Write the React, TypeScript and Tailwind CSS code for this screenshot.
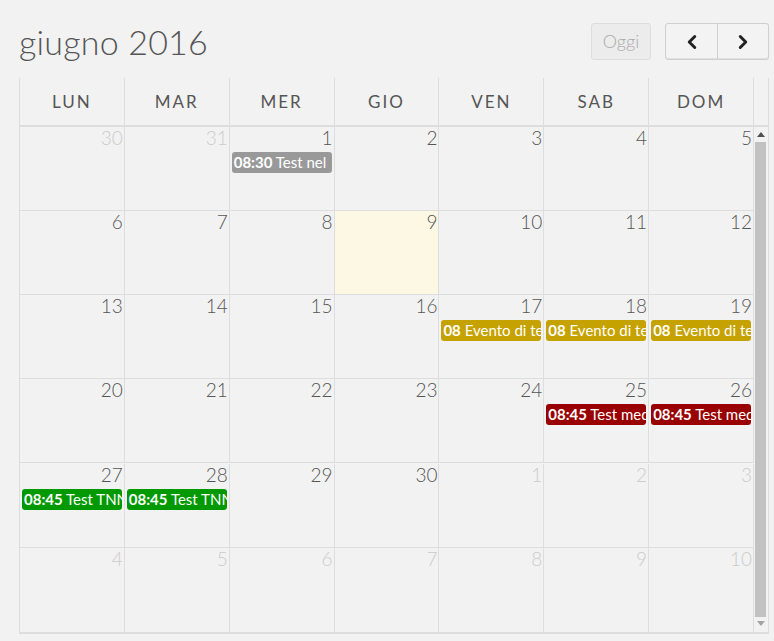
import React from "react";
import { ChevronLeft, ChevronRight } from "lucide-react";

type Ev = { time: string; title: string; color: string };
type Day = { n: number; other?: boolean; today?: boolean; ev?: Ev };

const gold = "bg-[#c6a200]";
const red = "bg-[#990000]";
const green = "bg-[#009900]";
const gray = "bg-[#999999]";

const weeks: Day[][] = [
  [
    { n: 30, other: true },
    { n: 31, other: true },
    { n: 1, ev: { time: "08:30", title: "Test nel", color: gray } },
    { n: 2 },
    { n: 3 },
    { n: 4 },
    { n: 5 },
  ],
  [{ n: 6 }, { n: 7 }, { n: 8 }, { n: 9, today: true }, { n: 10 }, { n: 11 }, { n: 12 }],
  [
    { n: 13 },
    { n: 14 },
    { n: 15 },
    { n: 16 },
    { n: 17, ev: { time: "08", title: "Evento di test", color: gold } },
    { n: 18, ev: { time: "08", title: "Evento di test", color: gold } },
    { n: 19, ev: { time: "08", title: "Evento di test", color: gold } },
  ],
  [
    { n: 20 },
    { n: 21 },
    { n: 22 },
    { n: 23 },
    { n: 24 },
    { n: 25, ev: { time: "08:45", title: "Test medico", color: red } },
    { n: 26, ev: { time: "08:45", title: "Test medico", color: red } },
  ],
  [
    { n: 27, ev: { time: "08:45", title: "Test TNN", color: green } },
    { n: 28, ev: { time: "08:45", title: "Test TNN", color: green } },
    { n: 29 },
    { n: 30 },
    { n: 1, other: true },
    { n: 2, other: true },
    { n: 3, other: true },
  ],
  [
    { n: 4, other: true },
    { n: 5, other: true },
    { n: 6, other: true },
    { n: 7, other: true },
    { n: 8, other: true },
    { n: 9, other: true },
    { n: 10, other: true },
  ],
];

const heads = ["LUN", "MAR", "MER", "GIO", "VEN", "SAB", "DOM"];

export default function App() {
  return (
    <div
      className="w-[774px] h-[641px] bg-[#f2f2f2] overflow-hidden text-[#555555]"
      style={{ fontFamily: "Lato, 'Open Sans', sans-serif" }}
    >
      <div className="flex items-start justify-between pl-[19px] pr-[5px] pt-[23px] h-[78px]">
        <h2 className="text-[34px] font-light leading-[38px] tracking-[0.2px] text-[#555555]">giugno 2016</h2>
        <div className="flex items-center">
          <button className="h-[37px] w-[60px] rounded-[3px] border border-[#dddddd] bg-[#ececec] text-[#aaaaaa] text-[18px] font-light">
            Oggi
          </button>
          <div className="flex ml-[14px]">
            <button className="h-[37px] w-[53px] rounded-l-[3px] border border-[#cfcfcf] bg-[#f3f3f3] flex items-center justify-center shadow-[inset_0_-1px_0_rgba(0,0,0,0.08)]">
              <ChevronLeft size={22} strokeWidth={3.2} color="#222" />
            </button>
            <button className="h-[37px] w-[51px] rounded-r-[3px] border border-l-0 border-[#cfcfcf] bg-[#f3f3f3] flex items-center justify-center shadow-[inset_0_-1px_0_rgba(0,0,0,0.08)]">
              <ChevronRight size={22} strokeWidth={3.2} color="#222" />
            </button>
          </div>
        </div>
      </div>

      <div className="ml-[19px] w-[750px] border-l border-[#dddddd]">
        {/* header */}
        <div className="flex h-[49px] border-b-2 border-[#dddddd]">
          <div className="w-[734px] grid grid-cols-7">
            {heads.map((h) => (
              <div
                key={h}
                className="border-r border-[#dddddd] flex items-center justify-center text-[17px] tracking-[2px] text-[#555555]"
              >
                {h}
              </div>
            ))}
          </div>
          <div className="w-[15px] border-r border-[#dddddd]" />
        </div>

        {/* body */}
        <div className="flex h-[507px] border-b-2 border-[#dddddd]">
          <div className="w-[734px] grid grid-cols-7 grid-rows-6">
            {weeks.flat().map((d, i) => (
              <div
                key={i}
                className={`border-r border-b border-[#dddddd] h-[84px] flex flex-col overflow-hidden ${
                  d.today ? "bg-[#fdf8e3]" : ""
                } ${i >= 35 ? "border-b-0" : ""}`}
              >
                <div
                  className={`text-right pr-[1px] text-[19px] font-light leading-[22px] ${
                    d.other ? "text-[#cccccc]" : "text-[#555555]"
                  }`}
                >
                  {d.n}
                </div>
                {d.ev && (
                  <div
                    className={`${d.ev.color} mx-[2px] mt-[3px] h-[21px] rounded-[3px] text-white text-[15px] leading-[21px] px-[2px] whitespace-nowrap overflow-hidden`}
                  >
                    <span className="font-bold">{d.ev.time}</span> {d.ev.title}
                  </div>
                )}
              </div>
            ))}
          </div>
          <div className="w-[15px] border-r border-[#dddddd] flex flex-col items-center pt-[3px] pb-[2px]">
            <div className="w-0 h-0 border-l-[4px] border-r-[4px] border-b-[5px] border-l-transparent border-r-transparent border-b-[#505050] mt-[2px]" />
            <div className="w-[11px] flex-1 bg-[#c1c1c1] mt-[5px] mb-[4px] mr-[2px]" />
            <div className="w-0 h-0 border-l-[4px] border-r-[4px] border-t-[5px] border-l-transparent border-r-transparent border-t-[#a3a3a3] mb-[4px]" />
          </div>
        </div>
      </div>
    </div>
  );
}
